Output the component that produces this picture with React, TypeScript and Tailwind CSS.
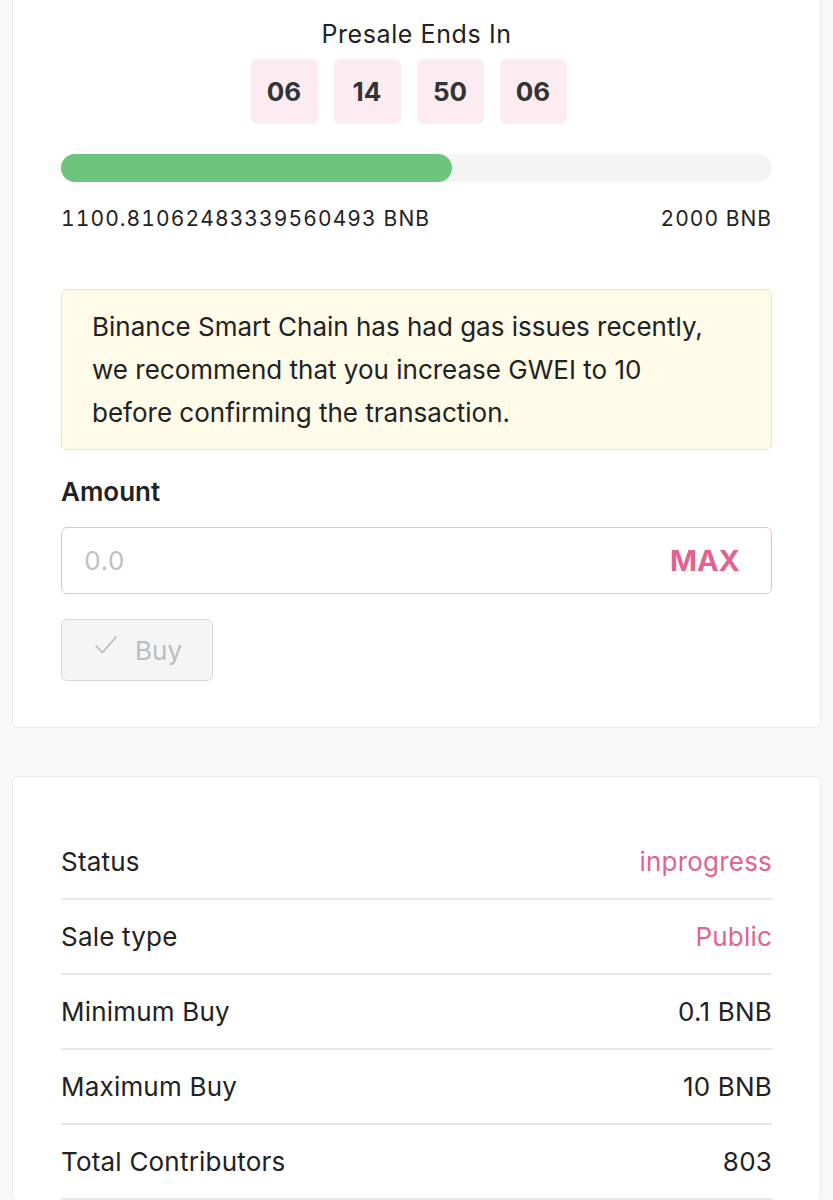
const font = { fontFamily: "Inter, 'Noto Sans', sans-serif" };

const rows = [
  { label: "Status", value: "inprogress", pink: true },
  { label: "Sale type", value: "Public", pink: true },
  { label: "Minimum Buy", value: "0.1 BNB" },
  { label: "Maximum Buy", value: "10 BNB" },
  { label: "Total Contributors", value: "803" },
];

export default function App() {
  return (
    <div className="min-h-[1200px] bg-[#f8f8f8] px-[12px] text-[#222]" style={font}>
      {/* Presale card */}
      <div className="rounded-b-[6px] border border-t-0 border-[#ececec] bg-white px-[48px] pb-[46px] pt-[18px]">
        <div className="text-center text-[25px] leading-[32px] tracking-[0.6px] text-[#222]">Presale Ends In</div>
        <div className="mt-[9px] flex justify-center gap-[16px] pr-[16px]">
          {["06", "14", "50", "06"].map((n, i) => (
            <div
              key={i}
              className="flex h-[65px] w-[67px] items-center justify-center rounded-[6px] bg-[#fcecf1] text-[26px] font-bold text-[#333]"
            >
              {n}
            </div>
          ))}
        </div>

        <div className="mt-[30px] h-[28px] w-full rounded-full bg-[#f4f4f4]">
          <div className="h-full w-[55%] rounded-full bg-[#6dc57d]" />
        </div>
        <div className="mt-[24px] flex justify-between text-[21px] leading-[26px] text-[#222] tabular-nums">
          <span className="tracking-[1.1px]">1100.81062483339560493 BNB</span>
          <span className="tracking-[1px]">2000 BNB</span>
        </div>

        <div className="mt-[57px] rounded-[6px] border border-[#f5e6a8] bg-[#fefbe8] px-[30px] py-[15px] text-[26px] leading-[43px] text-[#222]">
          Binance Smart Chain has had gas issues recently,
          <br />
          we recommend that you increase GWEI to 10
          <br />
          before confirming the transaction.
        </div>

        <div className="mt-[26px] text-[26px] font-semibold leading-[32px] text-[#222]">Amount</div>
        <div className="mt-[19px] flex h-[67px] items-center justify-between rounded-[6px] border-[1.5px] border-[#f4bcc4] pl-[22px] pr-[31px]">
          <span className="text-[26px] tabular-nums text-[#c0c0c0]">0.0</span>
          <span className="text-[29px] font-bold text-[#e2638f]">MAX</span>
        </div>
        <button className="mt-[25px] flex h-[62px] w-[152px] items-center rounded-[6px] border border-[#d9d9d9] bg-[#f5f5f5] pl-[33px] text-[26px] text-[#bdbdbd]">
          <svg width="22" height="18" viewBox="0 0 22 18" fill="none" className="-mt-[10px]">
            <path d="M1 10 L7.5 16.5 L21 1" stroke="#b8b8b8" strokeWidth="1.6" strokeLinecap="round" strokeLinejoin="round" />
          </svg>
          <span className="ml-[18px]">Buy</span>
        </button>
      </div>

      {/* Info card */}
      <div className="mt-[48px] rounded-[6px] border border-[#ececec] bg-white px-[48px] pt-[48px]">
        {rows.map((r) => (
          <div
            key={r.label}
            className="flex h-[75px] items-center justify-between border-b-2 border-[#e8e8e8] text-[26px] tracking-[0.2px]"
          >
            <span className="text-[#222]">{r.label}</span>
            <span className={r.pink ? "text-[#e2638f]" : "text-[#222]"}>{r.value}</span>
          </div>
        ))}
      </div>
    </div>
  );
}
